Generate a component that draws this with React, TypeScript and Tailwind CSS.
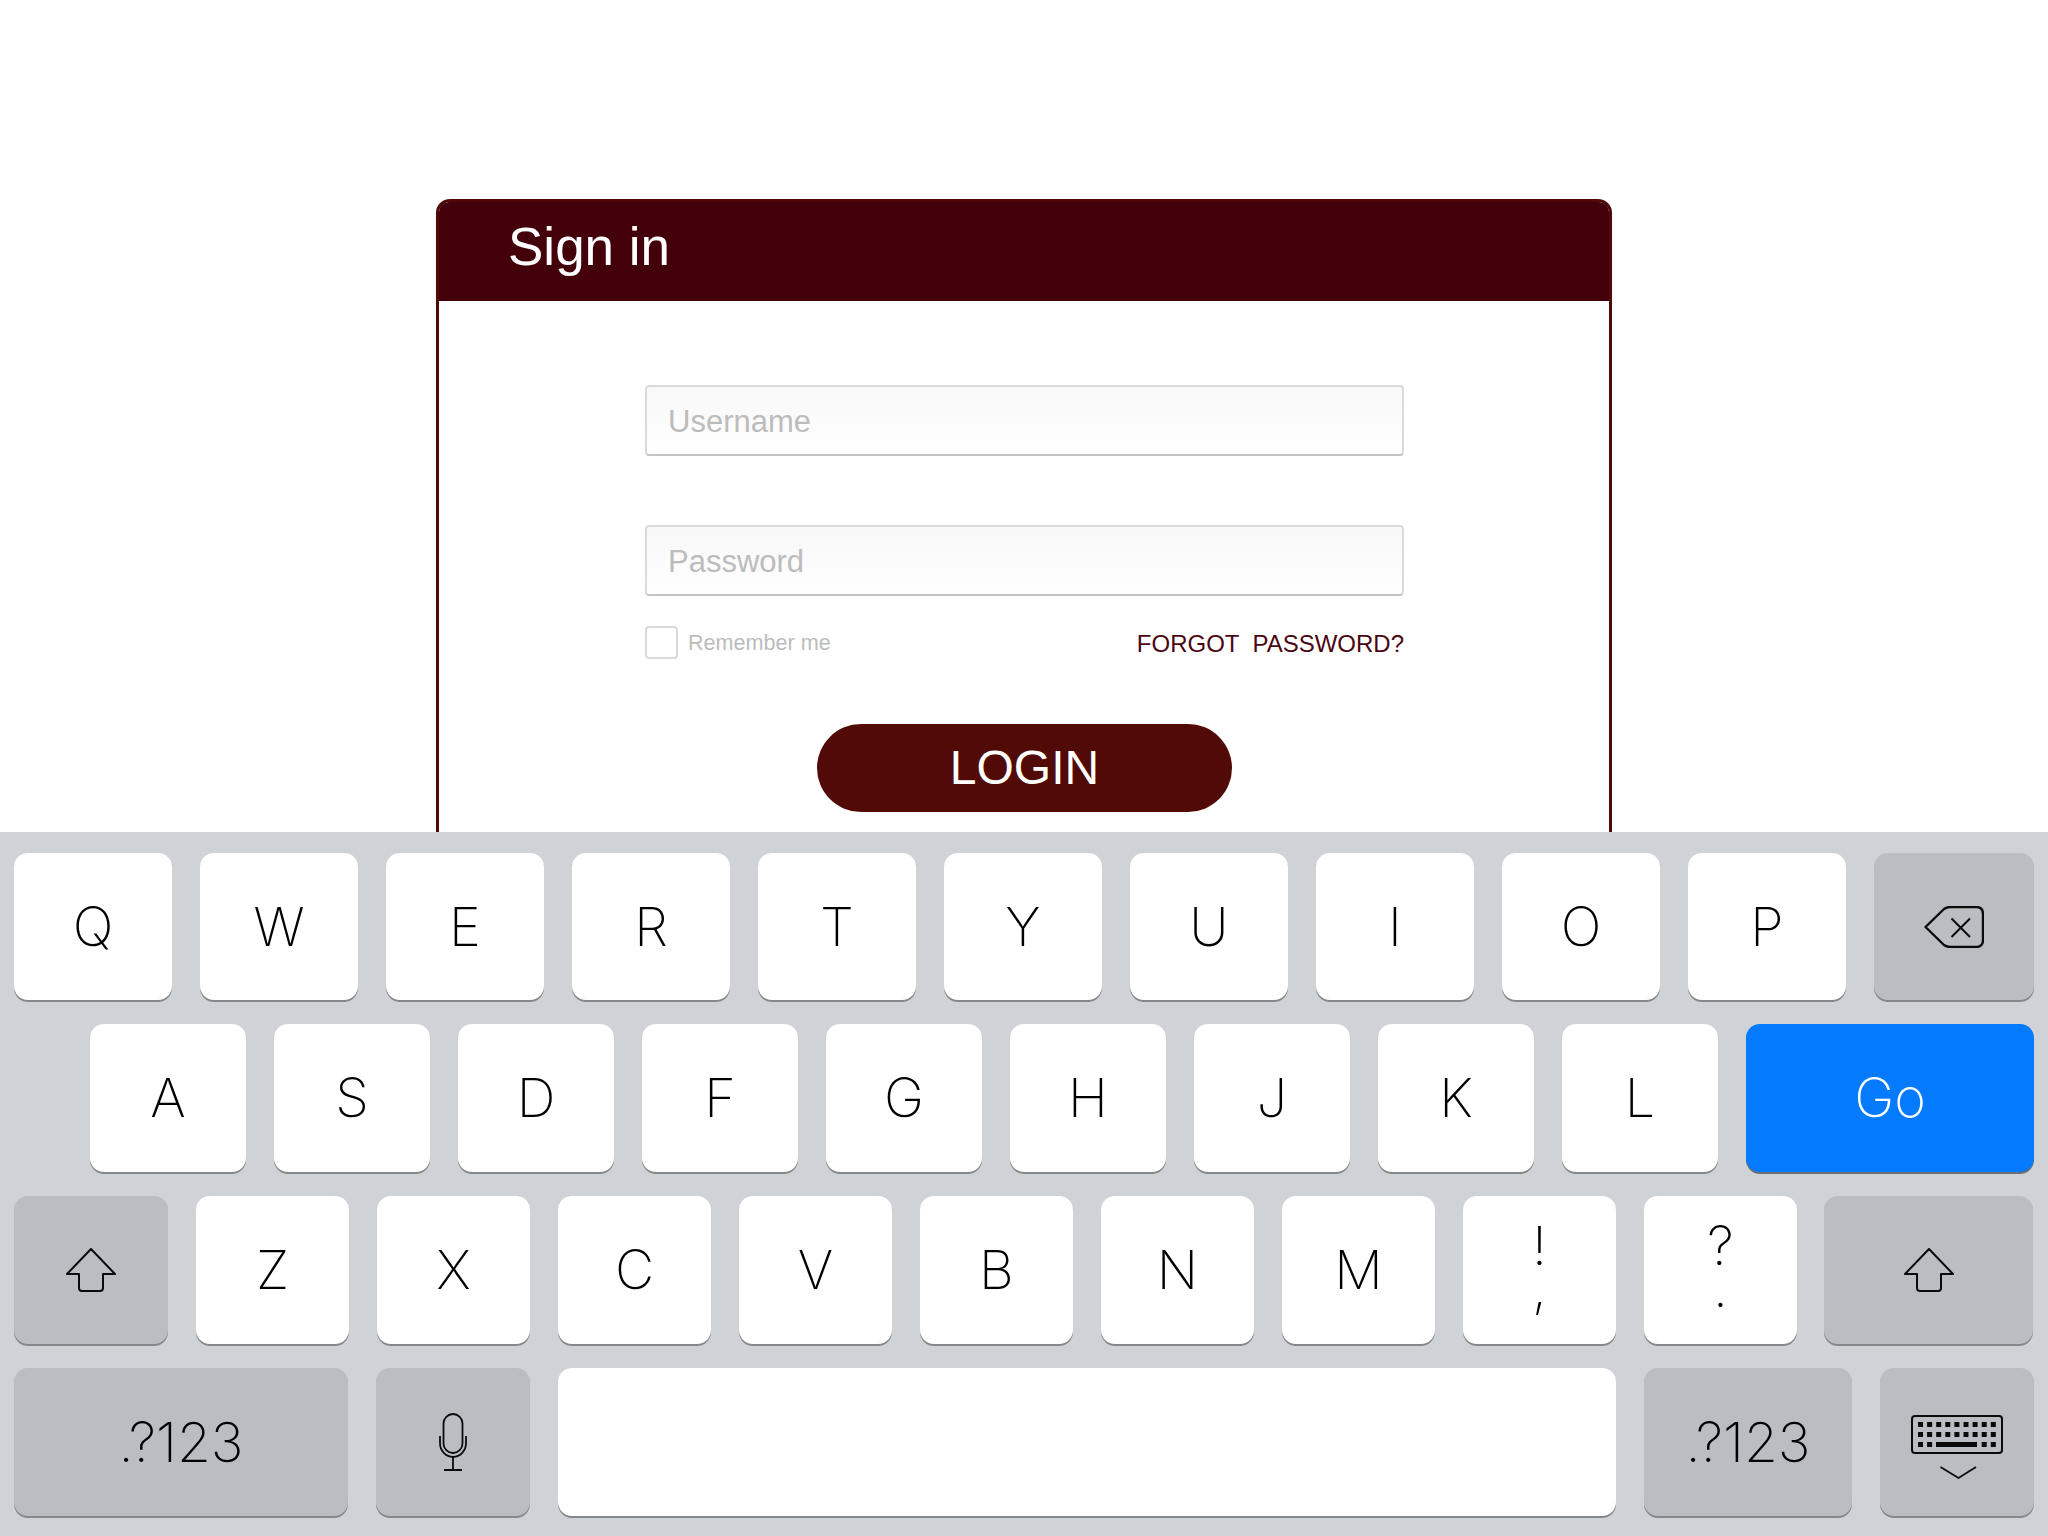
import React from "react";

const kf = "font-['Inter',sans-serif] font-[250]";

function Key({ w, gray, children, className = "" }: { w: string; gray?: boolean; children?: React.ReactNode; className?: string }) {
  return (
    <div
      className={`${w} h-full shrink-0 rounded-[14px] flex items-center justify-center text-[54px] leading-none text-black ${kf} ${
        gray ? "bg-[#babdc2] shadow-[0_2px_0_#85878b]" : "bg-white shadow-[0_2px_0_#85878b]"
      } ${className}`}
    >
      {children}
    </div>
  );
}

function ShiftIcon() {
  return (
    <svg width="50" height="44" viewBox="0 0 50 44" fill="none" stroke="#0a0a0a" strokeWidth="2" strokeLinejoin="round">
      <path d="M25 1 L49 26 H37 V40 Q37 43 34 43 H16 Q13 43 13 40 V26 H1 Z" />
    </svg>
  );
}

function BackspaceIcon() {
  return (
    <svg width="60" height="42" viewBox="0 0 60 42" fill="none" stroke="#0a0a0a" strokeWidth="2.4" strokeLinejoin="round">
      <path d="M1.5 21 L20 3 Q23 1 26 1 H52 Q59 1 59 8 V34 Q59 41 52 41 H26 Q23 41 20 39 Z" />
      <path d="M27.5 12.5 L46 31 M46 12.5 L27.5 31" strokeWidth="2" />
    </svg>
  );
}

function MicIcon() {
  return (
    <svg width="28" height="58" viewBox="0 0 28 58" fill="none" stroke="#0a0a0a" strokeWidth="1.8">
      <rect x="4.5" y="1" width="19" height="39" rx="9.5" />
      <path d="M1 23 V30 A13 14 0 0 0 27 30 V23" />
      <path d="M14 44 V57 M5 57 H23" />
    </svg>
  );
}

function KeyboardIcon() {
  const top = [0, 1, 2, 3, 4, 5, 6, 7, 8];
  return (
    <svg width="92" height="65" viewBox="0 0 92 65" fill="none">
      <rect x="1" y="1" width="90" height="37" rx="3" stroke="#0a0a0a" strokeWidth="2" />
      {top.map((i) => (
        <rect key={`a${i}`} x={7 + i * 9.1} y="7" width="5" height="5" fill="#0a0a0a" />
      ))}
      {top.map((i) => (
        <rect key={`b${i}`} x={7 + i * 9.1} y="17" width="5" height="5" fill="#0a0a0a" />
      ))}
      {[0, 1, 7, 8].map((i) => (
        <rect key={`c${i}`} x={7 + i * 9.1} y="27" width="5" height="5" fill="#0a0a0a" />
      ))}
      <rect x="25" y="27" width="41" height="5" fill="#0a0a0a" />
      <path d="M29.5 52 L47.5 63 L65 52" stroke="#0a0a0a" strokeWidth="1.8" />
    </svg>
  );
}

function Field({ placeholder, type }: { placeholder: string; type: string }) {
  return (
    <input
      type={type}
      placeholder={placeholder}
      className="w-full h-[71px] rounded-[4px] border-2 border-[#dadada] border-b-[#c4c4c4] bg-gradient-to-b from-[#f8f8f8] via-[#fbfbfb] to-white pl-[21px] pr-[22px] pt-[2px] text-[31px] text-[#333] placeholder:text-[#bcbcbc] font-['Liberation_Sans',Arial,sans-serif] outline-none"
    />
  );
}

export default function App() {
  return (
    <div className="w-[2048px] h-[1536px] flex flex-col bg-white overflow-hidden font-['Liberation_Sans',Arial,sans-serif]">
      <div className="h-[832px] shrink-0 overflow-hidden pt-[199px]">
        <div className="w-[1176px] h-[800px] ml-[436px] rounded-t-[14px] border-[3px] border-[#530808] bg-white">
          <div className="h-[99px] bg-[#43000b] pl-[69px] pt-[15px] rounded-t-[10px]">
            <h1 className="text-[53px] leading-[60px] text-white font-normal">Sign in</h1>
          </div>
          <div className="w-[759px] ml-[206px] pt-[84px] flex flex-col">
            <Field type="text" placeholder="Username" />
            <div className="h-[69px]" />
            <Field type="password" placeholder="Password" />
            <div className="mt-[30px] flex items-center justify-between h-[32px]">
              <label className="flex items-center gap-[10px]">
                <input type="checkbox" className="appearance-none w-[33px] h-[33px] rounded-[4px] border-2 border-[#dadada] bg-white" />
                <span className="text-[21.6px] text-[#bcbcbc] pt-[2px]">Remember me</span>
              </label>
              <a className="text-[24px] text-[#4a0612] whitespace-pre pt-[3px]">FORGOT  PASSWORD?</a>
            </div>
            <button className="mt-[66px] ml-[172px] w-[415px] h-[88px] rounded-full bg-[#520a06] text-white text-[48px] leading-none">
              LOGIN
            </button>
          </div>
        </div>
      </div>
      <div className="h-[704px] bg-[#cfd3d8] pt-[21px] flex flex-col">
        <div className="h-[147px] flex gap-[28px] pl-[14px]">
          {["Q", "W", "E", "R", "T", "Y", "U", "I", "O", "P"].map((k) => (
            <Key key={k} w="w-[158px]">{k}</Key>
          ))}
          <Key w="w-[160px]" gray><BackspaceIcon /></Key>
        </div>
        <div className="h-[148px] mt-[24px] flex gap-[28px] pl-[90px]">
          {["A", "S", "D", "F", "G", "H", "J", "K", "L"].map((k) => (
            <Key key={k} w="w-[156px]">{k}</Key>
          ))}
          <Key w="w-[288px]" className="!bg-[#047bff] !text-white !shadow-[0_2px_0_#6e6e70]">Go</Key>
        </div>
        <div className="h-[148px] mt-[24px] flex gap-[28px] pl-[14px]">
          <Key w="w-[154px]" gray><ShiftIcon /></Key>
          {["Z", "X", "C", "V", "B", "N", "M"].map((k) => (
            <Key key={k} w="w-[153px]">{k}</Key>
          ))}
          <Key w="w-[153px]">
            <div className="whitespace-pre text-center leading-[42px] mt-[-6px]">{"!\n,"}</div>
          </Key>
          <Key w="w-[153px]">
            <div className="whitespace-pre text-center leading-[42px] mt-[-6px]">{"?\n."}</div>
          </Key>
          <Key w="w-[209px] ml-[-1px]" gray><ShiftIcon /></Key>
        </div>
        <div className="h-[148px] mt-[24px] flex gap-[28px] pl-[14px]">
          <Key w="w-[334px]" gray className="!text-[55px]">.?123</Key>
          <Key w="w-[154px]" gray><MicIcon /></Key>
          <Key w="w-[1058px]" />
          <Key w="w-[208px]" gray className="!text-[55px]">.?123</Key>
          <Key w="w-[154px]" gray className="items-start pt-[47px]"><KeyboardIcon /></Key>
        </div>
      </div>
    </div>
  );
}
